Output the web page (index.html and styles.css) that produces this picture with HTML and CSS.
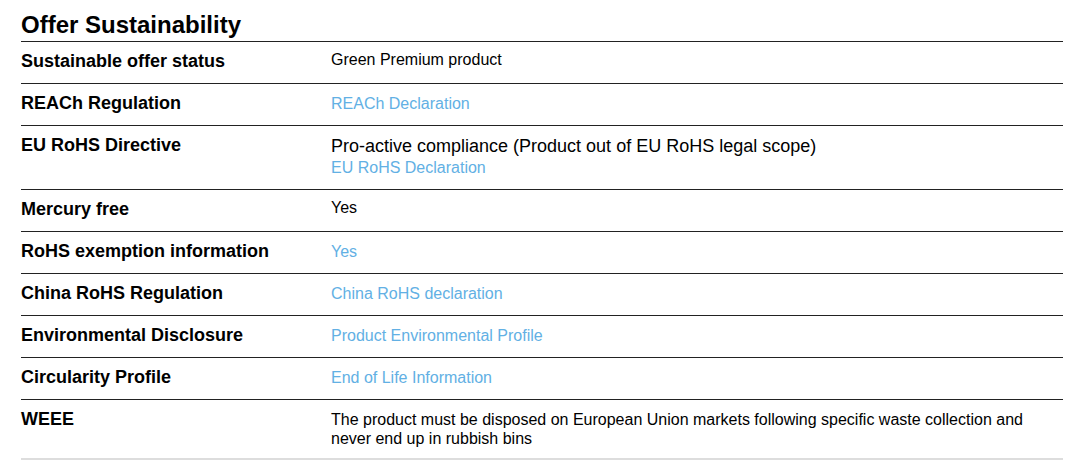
FILE: index.html
```html
<!DOCTYPE html>
<html lang="en">
<head>
<meta charset="utf-8">
<title>Offer Sustainability</title>
<link rel="stylesheet" href="styles.css">
</head>
<body>
<section class="sheet">
  <h2 class="title">Offer Sustainability</h2>
  <div class="row">
    <div class="label">Sustainable offer status</div>
    <div class="value small">Green Premium product</div>
  </div>
  <div class="row">
    <div class="label">REACh Regulation</div>
    <div class="value"><a class="link" href="#">REACh Declaration</a></div>
  </div>
  <div class="row">
    <div class="label">EU RoHS Directive</div>
    <div class="value">
      <div class="large">Pro-active compliance (Product out of EU RoHS legal scope)</div>
      <a class="link" href="#">EU RoHS Declaration</a>
    </div>
  </div>
  <div class="row">
    <div class="label">Mercury free</div>
    <div class="value small">Yes</div>
  </div>
  <div class="row">
    <div class="label">RoHS exemption information</div>
    <div class="value"><a class="link" href="#">Yes</a></div>
  </div>
  <div class="row">
    <div class="label">China RoHS Regulation</div>
    <div class="value"><a class="link" href="#">China RoHS declaration</a></div>
  </div>
  <div class="row">
    <div class="label">Environmental Disclosure</div>
    <div class="value"><a class="link" href="#">Product Environmental Profile</a></div>
  </div>
  <div class="row">
    <div class="label">Circularity Profile</div>
    <div class="value"><a class="link" href="#">End of Life Information</a></div>
  </div>
  <div class="row last">
    <div class="label">WEEE</div>
    <div class="value small para">The product must be disposed on European Union markets following specific waste collection and never end up in rubbish bins</div>
  </div>
</section>
</body>
</html>
```
FILE: styles.css
```css
html, body {
  margin: 0;
  padding: 0;
  background: #fff;
}
body {
  font-family: "Liberation Sans", Arial, sans-serif;
  color: #000;
}
.sheet {
  width: 1042px;
  padding: 11px 0 0 21px;
}
.title {
  margin: 0;
  font-size: 24px;
  line-height: 28px;
  font-weight: bold;
  padding-bottom: 2px;
  border-bottom: 1px solid #222;
}
.row {
  display: flex;
  padding: 8px 0 11px 0;
  border-bottom: 1px solid #222;
}
.row.last {
  border-bottom: 2px solid #ddd;
  padding-bottom: 12px;
}
.label {
  width: 310px;
  flex: none;
  font-size: 18px;
  line-height: 22px;
  font-weight: bold;
}
.value {
  flex: 1;
  font-size: 16px;
  line-height: 22px;
  padding-top: 1px;
  margin-bottom: -1px;
}
.value.small {
  font-size: 16px;
  line-height: 20px;
  padding-top: 0;
  margin-bottom: 0;
}
.value.para {
  line-height: 19px;
  padding-top: 2px;
  margin-bottom: -2px;
  padding-right: 30px;
}
.large {
  font-size: 18px;
  line-height: 22px;
}
.link {
  color: #62b0e4;
  text-decoration: none;
}
```
